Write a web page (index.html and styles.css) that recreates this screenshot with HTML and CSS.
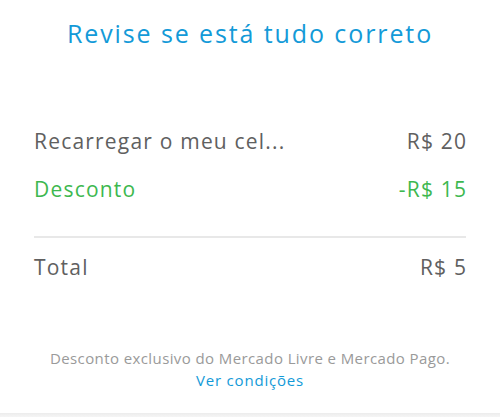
FILE: index.html
```html
<!DOCTYPE html>
<html lang="pt-BR">
<head>
<meta charset="utf-8">
<link rel="stylesheet" href="styles.css">
</head>
<body>
<main class="page">
  <h1 class="title">Revise se está tudo correto</h1>
  <section class="summary">
    <div class="row">
      <span>Recarregar o meu cel...</span>
      <span>R$ 20</span>
    </div>
    <div class="row discount">
      <span>Desconto</span>
      <span>-R$ 15</span>
    </div>
    <div class="row total">
      <span>Total</span>
      <span>R$ 5</span>
    </div>
  </section>
  <footer class="note">
    <p class="disclaimer">Desconto exclusivo do Mercado Livre e Mercado Pago.</p>
    <a class="link" href="#">Ver condições</a>
  </footer>
  <div class="strip"></div>
</main>
</body>
</html>
```

FILE: styles.css
```css
* { box-sizing: border-box; }
html, body { margin: 0; padding: 0; background: #fff; }
body {
  font-family: "Open Sans", "Lato", sans-serif;
  width: 500px;
  height: 417px;
  overflow: hidden;
}
.page {
  display: flex;
  flex-direction: column;
  height: 417px;
}
.title {
  margin: 0;
  padding-top: 17px;
  text-align: center;
  font-size: 25px;
  line-height: 32px;
  font-weight: 400;
  color: #139ad8;
  letter-spacing: 1.9px;
}
.summary {
  padding: 0 34px;
  margin-top: 78px;
}
.row {
  display: flex;
  justify-content: space-between;
  font-size: 21px;
  line-height: 28px;
  color: #606060;
  height: 48px;
  letter-spacing: 1.2px;
}
.row span:last-child { margin-right: -1.2px; }
.discount { color: #3db84f; }
.total {
  border-top: 2px solid #e8e8e8;
  margin-top: 13px;
  padding-top: 15px;
  height: auto;
}
.note {
  margin-top: 66px;
  text-align: center;
  font-size: 15px;
  line-height: 22px;
  color: #9a9a9a;
  letter-spacing: 0.4px;
}
.disclaimer { margin: 0; }
.link { color: #139ad8; text-decoration: none; letter-spacing: 0.8px; }
.strip {
  margin-top: auto;
  height: 4px;
  background: linear-gradient(#ececec, #f5f5f5);
}
```
